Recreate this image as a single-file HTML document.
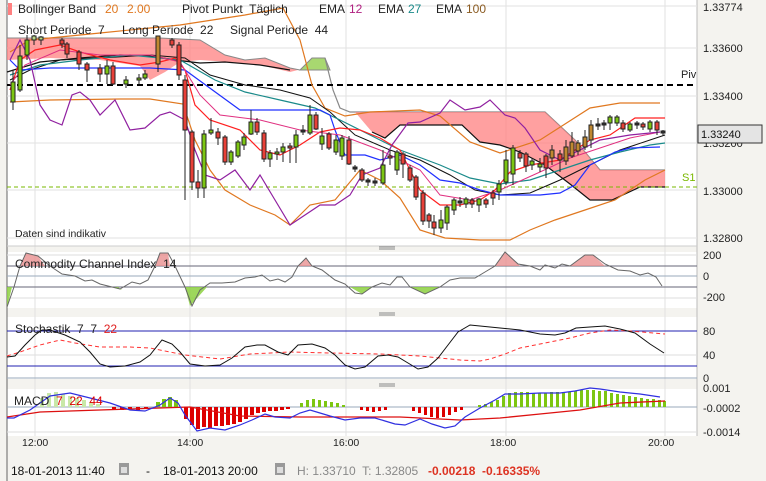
<!DOCTYPE html>
<html><head><meta charset="utf-8"><style>
body{margin:0;width:766px;height:481px;background:#f4f3ef;overflow:hidden;font-family:"Liberation Sans",sans-serif}
svg{position:absolute;left:0;top:0}
text{font-family:"Liberation Sans",sans-serif;white-space:pre}
</style></head><body>
<svg width="766" height="481" viewBox="0 0 766 481" xml:space="preserve">
<rect x="7" y="0" width="690" height="246" fill="#fff"/>
<rect x="7" y="252" width="690" height="56" fill="#fff"/>
<rect x="7" y="317" width="690" height="62" fill="#fff"/>
<rect x="7" y="389" width="690" height="47" fill="#fff"/>
<line x1="7" y1="0" x2="7" y2="481" stroke="#666"/>
<line x1="697" y1="0" x2="697" y2="436" stroke="#bbb"/>
<g stroke="#e2e2e2">
<line x1="35" y1="0" x2="35" y2="436"/><line x1="190" y1="0" x2="190" y2="436"/>
<line x1="346" y1="0" x2="346" y2="436"/><line x1="506" y1="0" x2="506" y2="436"/>
<line x1="665" y1="0" x2="665" y2="436"/>
<line x1="7" y1="6" x2="697" y2="6"/><line x1="7" y1="48" x2="697" y2="48"/>
<line x1="7" y1="96" x2="697" y2="96"/><line x1="7" y1="143" x2="697" y2="143"/>
<line x1="7" y1="190" x2="697" y2="190"/><line x1="7" y1="238" x2="697" y2="238"/>
</g>
<g stroke="#888"><line x1="379" y1="247" x2="395" y2="247"/><line x1="379" y1="249" x2="395" y2="249"/>
<line x1="379" y1="313" x2="395" y2="313"/><line x1="379" y1="315" x2="395" y2="315"/>
<line x1="379" y1="384" x2="395" y2="384"/><line x1="379" y1="386" x2="395" y2="386"/></g>
<line x1="7" y1="246" x2="697" y2="246" stroke="#ccc"/>

<polygon points="7,38 160,38 200,40 225,55 245,60 265,58 290,68 298,70 290,72 260,65 230,62 200,60 180,62 165,72 150,80 140,66 100,60 50,58 7,60" fill="#ff8080" fill-opacity="0.75"/>
<polygon points="300,70 312,58 325,58 330,70" fill="#a8d870" stroke="#888"/>
<polyline points="7,38 160,38 200,40 225,55 245,60 265,58 290,68 300,70" fill="none" stroke="#888"/>
<polyline points="325,58 333,90 340,108 350,112 545,112 575,140 600,170 665,170" fill="none" stroke="#888" stroke-width="1.2"/>
<polygon points="355,112 545,112 575,140 600,170 665,170 665,187 640,187 612,200 590,200 570,184 545,165 520,152 500,145 480,142 462,125 400,125 385,138 372,132" fill="#ff8080" fill-opacity="0.75"/>
<polyline points="372,132 385,138 400,125 462,125 480,142 500,145 520,152 545,165 570,184 590,200 612,200 640,187 665,187" fill="none" stroke="#111" stroke-width="1.2"/>
<polyline points="7,72 40,62 80,58 120,55 150,56 175,60 200,63 225,62 260,65 290,70" fill="none" stroke="#111" stroke-width="1.2"/>

<line x1="7" y1="85" x2="697" y2="85" stroke="#000" stroke-width="2" stroke-dasharray="6,4"/>
<line x1="7" y1="187" x2="697" y2="187" stroke="#7ab800" stroke-dasharray="4,3"/>
<text x="681" y="78" font-size="11" fill="#222">Piv</text>
<text x="682" y="181" font-size="11" fill="#7ab800">S1</text>

<polyline points="10,52 30,40 100,33 150,28 180,25 245,15 283,8 300,40 312,85 325,108 345,116 370,112 420,110 440,116 470,142 500,153 540,140 565,124 590,108 620,103 660,103" fill="none" stroke="#e07820" stroke-width="1.2"/>
<polyline points="10,102 50,100 120,99 150,99 183,104 195,140 210,170 225,190 250,205 275,215 290,225 310,205 335,200 360,170 380,180 400,198 420,230 445,238 480,240 510,240 530,230 555,220 585,210 615,200 645,180 665,170" fill="none" stroke="#e07820" stroke-width="1.2"/>
<polyline points="10,80 30,70 60,60 100,58 150,55 185,58 210,75 245,85 280,90 310,98 330,112 355,135 390,150 420,160 450,175 475,190 500,195 530,193 560,180 590,165 620,150 650,140 665,135" fill="none" stroke="#111"/>
<polyline points="10,75 40,65 80,60 130,55 180,60 215,80 245,92 280,100 315,108 340,120 360,130 400,150 440,165 470,178 500,184 530,180 560,170 590,160 620,152 650,145 665,143" fill="none" stroke="#1a8a8a" stroke-width="1.2"/>
<polyline points="10,60 20,70 50,68 150,68 185,70 240,110 320,110 330,115 335,130 345,155 365,155 380,160 400,155 420,165 440,180 460,183 480,190 500,195 540,195 560,193 575,185 590,165 600,160 615,152 630,148 660,147" fill="none" stroke="#2030ff" stroke-width="1.2"/>
<polyline points="10,90 20,60 35,50 60,45 80,52 110,60 140,65 160,62 175,58 185,70 195,105 210,120 240,130 260,150 280,155 300,145 320,132 340,128 360,130 380,138 400,150 420,190 440,205 460,205 480,200 495,190 510,172 530,165 560,160 590,140 610,135 635,118 665,118" fill="none" stroke="#ff2020" stroke-width="1.2"/>
<polyline points="10,85 25,65 60,50 100,55 150,55 180,62 200,95 220,115 260,120 300,130 340,135 380,150 420,170 440,195 470,200 500,190 540,172 570,158 600,148 630,138 660,132" fill="none" stroke="#e03080" stroke-width="1"/>
<polyline points="10,60 20,40 30,60 40,105 50,120 62,125 72,95 80,92 90,100 100,115 115,100 130,130 145,128 160,115 170,112 185,120 195,150 205,175 220,180 235,170 250,190 260,175 275,200 290,225 305,215 320,205 335,205 350,195 362,175 380,168 392,145 408,123 420,122 440,113 450,100 465,110 480,107 490,100 505,115 515,118 525,128 540,150 560,160 580,150 600,140 630,135 660,132" fill="none" stroke="#9020a0" stroke-width="1.2"/>

<g stroke="#222" stroke-width="1">
<line x1="13" y1="70" x2="13" y2="110"/><rect x="11" y="82" width="4" height="20" fill="#7cc612"/>
<line x1="20" y1="45" x2="20" y2="92"/><rect x="18" y="56" width="4" height="34" fill="#7cc612"/>
<line x1="27" y1="35" x2="27" y2="60"/><rect x="25" y="40" width="4" height="15" fill="#7cc612"/>
<line x1="34" y1="35" x2="34" y2="45"/><rect x="32" y="36" width="4" height="4" fill="#b8d888"/>
<line x1="41" y1="36" x2="41" y2="45"/><rect x="39" y="37" width="4" height="3" fill="#b8d888"/>
<line x1="62" y1="38" x2="62" y2="48"/><rect x="60" y="40" width="4" height="4" fill="#e84038"/>
<line x1="67" y1="42" x2="67" y2="58"/><rect x="65" y="44" width="4" height="10" fill="#e84038"/>
<line x1="79" y1="50" x2="79" y2="70"/><rect x="77" y="52" width="4" height="12" fill="#e84038"/>
<line x1="87" y1="62" x2="87" y2="82"/><rect x="85" y="64" width="4" height="6" fill="#e84038"/>
<line x1="100" y1="64" x2="100" y2="82"/><rect x="98" y="68" width="4" height="6" fill="#e84038"/>
<line x1="107" y1="60" x2="107" y2="84"/><rect x="105" y="66" width="4" height="8" fill="#7cc612"/>
<line x1="113" y1="62" x2="113" y2="85"/><rect x="111" y="66" width="4" height="18" fill="#e84038"/>
<line x1="126" y1="76" x2="126" y2="88"/><rect x="124" y="80" width="4" height="4" fill="#7cc612"/>
<line x1="139" y1="74" x2="139" y2="84"/><rect x="137" y="78" width="4" height="2" fill="#7cc612"/>
<line x1="145" y1="70" x2="145" y2="80"/><rect x="143" y="74" width="4" height="4" fill="#7cc612"/>
<line x1="158" y1="36" x2="158" y2="72"/><rect x="156" y="36" width="4" height="28" fill="#c08830"/>
<line x1="172" y1="38" x2="172" y2="48"/><rect x="170" y="40" width="4" height="5" fill="#e84038"/>
<line x1="179" y1="42" x2="179" y2="80"/><rect x="177" y="45" width="4" height="30" fill="#e84038"/>
<line x1="185" y1="75" x2="185" y2="200"/><rect x="183" y="80" width="4" height="50" fill="#e84038"/>
<line x1="192" y1="130" x2="192" y2="190"/><rect x="190" y="132" width="4" height="50" fill="#e84038"/>
<line x1="198" y1="170" x2="198" y2="198"/><rect x="196" y="182" width="4" height="6" fill="#e84038"/>
<line x1="204" y1="130" x2="204" y2="198"/><rect x="202" y="134" width="4" height="54" fill="#7cc612"/>
<line x1="211" y1="118" x2="211" y2="135"/><rect x="209" y="130" width="4" height="3" fill="#7cc612"/>
<line x1="218" y1="128" x2="218" y2="145"/><rect x="216" y="132" width="4" height="6" fill="#e84038"/>
<line x1="225" y1="135" x2="225" y2="165"/><rect x="223" y="137" width="4" height="25" fill="#e84038"/>
<line x1="231" y1="150" x2="231" y2="165"/><rect x="229" y="152" width="4" height="10" fill="#7cc612"/>
<line x1="238" y1="140" x2="238" y2="158"/><rect x="236" y="142" width="4" height="14" fill="#7cc612"/>
<line x1="244" y1="133" x2="244" y2="150"/><rect x="242" y="137" width="4" height="8" fill="#7cc612"/>
<line x1="251" y1="110" x2="251" y2="135"/><rect x="249" y="122" width="4" height="12" fill="#7cc612"/>
<line x1="257" y1="118" x2="257" y2="135"/><rect x="255" y="122" width="4" height="10" fill="#e84038"/>
<line x1="264" y1="130" x2="264" y2="162"/><rect x="262" y="133" width="4" height="26" fill="#e84038"/>
<line x1="270" y1="150" x2="270" y2="167"/><rect x="268" y="153" width="4" height="6" fill="#7cc612"/>
<line x1="277" y1="148" x2="277" y2="160"/><rect x="275" y="152" width="4" height="2" fill="#7cc612"/>
<line x1="283" y1="143" x2="283" y2="162"/><rect x="281" y="147" width="4" height="5" fill="#7cc612"/>
<line x1="290" y1="143" x2="290" y2="163"/><rect x="288" y="146" width="4" height="2" fill="#e84038"/>
<line x1="296" y1="130" x2="296" y2="163"/><rect x="294" y="135" width="4" height="12" fill="#7cc612"/>
<line x1="303" y1="125" x2="303" y2="135"/><rect x="301" y="130" width="4" height="2" fill="#333"/>
<line x1="310" y1="105" x2="310" y2="135"/><rect x="308" y="115" width="4" height="18" fill="#7cc612"/>
<line x1="316" y1="112" x2="316" y2="130"/><rect x="314" y="115" width="4" height="14" fill="#e84038"/>
<line x1="322" y1="128" x2="322" y2="150"/><rect x="320" y="136" width="4" height="8" fill="#7cc612"/>
<line x1="329" y1="132" x2="329" y2="150"/><rect x="327" y="134" width="4" height="14" fill="#e84038"/>
<line x1="336" y1="135" x2="336" y2="155"/><rect x="334" y="140" width="4" height="12" fill="#7cc612"/>
<line x1="342" y1="135" x2="342" y2="160"/><rect x="340" y="138" width="4" height="18" fill="#7cc612"/>
<line x1="349" y1="136" x2="349" y2="165"/><rect x="347" y="140" width="4" height="24" fill="#e84038"/>
<line x1="355" y1="165" x2="355" y2="172"/><rect x="353" y="167" width="4" height="2" fill="#333"/>
<line x1="362" y1="168" x2="362" y2="182"/><rect x="360" y="170" width="4" height="10" fill="#e84038"/>
<line x1="368" y1="178" x2="368" y2="186"/><rect x="366" y="180" width="4" height="2" fill="#333"/>
<line x1="375" y1="178" x2="375" y2="186"/><rect x="373" y="181" width="4" height="2" fill="#333"/>
<line x1="383" y1="150" x2="383" y2="185"/><rect x="381" y="165" width="4" height="18" fill="#7cc612"/>
<line x1="390" y1="150" x2="390" y2="165"/><rect x="388" y="156" width="4" height="2" fill="#e84038"/>
<line x1="397" y1="150" x2="397" y2="175"/><rect x="395" y="152" width="4" height="18" fill="#7cc612"/>
<line x1="403" y1="152" x2="403" y2="178"/><rect x="401" y="154" width="4" height="10" fill="#e84038"/>
<line x1="410" y1="165" x2="410" y2="182"/><rect x="408" y="168" width="4" height="12" fill="#e84038"/>
<line x1="416" y1="175" x2="416" y2="200"/><rect x="414" y="177" width="4" height="20" fill="#e84038"/>
<line x1="423" y1="190" x2="423" y2="225"/><rect x="421" y="193" width="4" height="28" fill="#e84038"/>
<line x1="429" y1="213" x2="429" y2="228"/><rect x="427" y="215" width="4" height="6" fill="#e84038"/>
<line x1="434" y1="215" x2="434" y2="235"/><rect x="432" y="222" width="4" height="6" fill="#e84038"/>
<line x1="441" y1="210" x2="441" y2="233"/><rect x="439" y="220" width="4" height="8" fill="#7cc612"/>
<line x1="447" y1="205" x2="447" y2="230"/><rect x="445" y="207" width="4" height="16" fill="#7cc612"/>
<line x1="454" y1="198" x2="454" y2="215"/><rect x="452" y="200" width="4" height="10" fill="#7cc612"/>
<line x1="460" y1="197" x2="460" y2="207"/><rect x="458" y="201" width="4" height="2" fill="#333"/>
<line x1="466" y1="197" x2="466" y2="208"/><rect x="464" y="199" width="4" height="5" fill="#7cc612"/>
<line x1="472" y1="198" x2="472" y2="208"/><rect x="470" y="200" width="4" height="4" fill="#e84038"/>
<line x1="479" y1="198" x2="479" y2="212"/><rect x="477" y="199" width="4" height="6" fill="#7cc612"/>
<line x1="486" y1="198" x2="486" y2="208"/><rect x="484" y="200" width="4" height="4" fill="#e84038"/>
<line x1="493" y1="190" x2="493" y2="205"/><rect x="491" y="193" width="4" height="5" fill="#e84038"/>
<line x1="499" y1="180" x2="499" y2="200"/><rect x="497" y="184" width="4" height="8" fill="#7cc612"/>
<line x1="506" y1="150" x2="506" y2="185"/><rect x="504" y="160" width="4" height="22" fill="#7cc612"/>
<line x1="513" y1="145" x2="513" y2="185"/><rect x="511" y="148" width="4" height="26" fill="#7cc612"/>
<line x1="520" y1="150" x2="520" y2="162"/><rect x="518" y="153" width="4" height="5" fill="#e84038"/>
<line x1="526" y1="152" x2="526" y2="172"/><rect x="524" y="154" width="4" height="12" fill="#e84038"/>
<line x1="532" y1="158" x2="532" y2="170"/><rect x="530" y="161" width="4" height="4" fill="#7cc612"/>
<line x1="540" y1="158" x2="540" y2="172"/><rect x="538" y="164" width="4" height="3" fill="#7cc612"/>
<line x1="546" y1="154" x2="546" y2="178"/><rect x="544" y="156" width="4" height="12" fill="#e84038"/>
<line x1="552" y1="145" x2="552" y2="165"/><rect x="550" y="150" width="4" height="8" fill="#c08830"/>
<line x1="560" y1="150" x2="560" y2="172"/><rect x="558" y="154" width="4" height="6" fill="#e84038"/>
<line x1="566" y1="140" x2="566" y2="165"/><rect x="564" y="147" width="4" height="14" fill="#c08830"/>
<line x1="572" y1="132" x2="572" y2="158"/><rect x="570" y="142" width="4" height="14" fill="#c08830"/>
<line x1="578" y1="140" x2="578" y2="155"/><rect x="576" y="143" width="4" height="8" fill="#c08830"/>
<line x1="585" y1="130" x2="585" y2="150"/><rect x="583" y="137" width="4" height="10" fill="#c08830"/>
<line x1="591" y1="120" x2="591" y2="148"/><rect x="589" y="125" width="4" height="15" fill="#c08830"/>
<line x1="598" y1="118" x2="598" y2="130"/><rect x="596" y="124" width="4" height="2" fill="#333"/>
<line x1="604" y1="120" x2="604" y2="130"/><rect x="602" y="123" width="4" height="2" fill="#333"/>
<line x1="610" y1="115" x2="610" y2="130"/><rect x="608" y="117" width="4" height="6" fill="#7cc612"/>
<line x1="617" y1="115" x2="617" y2="126"/><rect x="615" y="117" width="4" height="6" fill="#7cc612"/>
<line x1="623" y1="120" x2="623" y2="132"/><rect x="621" y="123" width="4" height="6" fill="#e84038"/>
<line x1="630" y1="122" x2="630" y2="132"/><rect x="628" y="124" width="4" height="6" fill="#7cc612"/>
<line x1="637" y1="121" x2="637" y2="129"/><rect x="635" y="123" width="4" height="2" fill="#333"/>
<line x1="643" y1="122" x2="643" y2="130"/><rect x="641" y="124" width="4" height="3" fill="#e84038"/>
<line x1="650" y1="120" x2="650" y2="132"/><rect x="648" y="122" width="4" height="7" fill="#7cc612"/>
<line x1="657" y1="120" x2="657" y2="135"/><rect x="655" y="122" width="4" height="8" fill="#e84038"/>
<line x1="663" y1="130" x2="663" y2="136"/><rect x="661" y="131" width="4" height="2" fill="#333"/>
</g>

<g font-size="12" fill="#222">
<rect x="8" y="3" width="4" height="12" fill="#ff8080"/>
<text x="18" y="13">Bollinger Band</text><text x="105" y="13" fill="#e07820">20</text><text x="127" y="13" fill="#e07820">2.00</text>
<text x="182" y="13">Pivot Punkt  Täglich</text>
<text x="319" y="13">EMA</text><text x="349" y="13" fill="#b02080">12</text>
<text x="378" y="13">EMA</text><text x="408" y="13" fill="#1a8a8a">27</text>
<text x="436" y="13">EMA</text><text x="466" y="13" fill="#8a5a20">100</text>
<text x="18" y="34">Short Periode  7</text>
<text x="122" y="34">Long Periode  22</text>
<text x="230" y="34">Signal Periode  44</text>
<text x="15" y="237" font-size="10.5">Daten sind indikativ</text>
</g>
<g font-size="11" fill="#222">
<text x="703" y="11">1.33774</text><text x="703" y="52">1.33600</text>
<text x="703" y="100">1.33400</text><text x="703" y="147">1.33200</text>
<text x="703" y="195">1.33000</text><text x="703" y="242">1.32800</text>
</g>
<rect x="698" y="125" width="64" height="18" fill="#e4e4e4" stroke="#333"/>
<text x="701" y="138" font-size="11" fill="#111">1.33240</text>

<g stroke-width="1">
<line x1="7" y1="255" x2="697" y2="255" stroke="#ddd"/>
<line x1="7" y1="266" x2="697" y2="266" stroke="#667"/>
<line x1="7" y1="276" x2="697" y2="276" stroke="#9ab"/>
<line x1="7" y1="287" x2="697" y2="287" stroke="#667"/>
<line x1="7" y1="298" x2="697" y2="298" stroke="#ddd"/>
</g>
<g fill="#8cd040" fill-opacity="0.85">
<polygon points="7,287 12,287 7,308"/><polygon points="185,287 207,287 190,306"/>
<polygon points="112,287 122,290 118,287"/>
<polygon points="350,287 362,294 372,287"/>
<polygon points="410,287 425,294 440,287"/>
</g>
<g fill="#e89090" fill-opacity="0.8">
<polygon points="20,266 26,253 38,256 45,266"/>
<polygon points="155,266 160,253 168,253 170,266"/>
<polygon points="298,266 306,258 312,266"/>
<polygon points="495,266 505,252 520,266"/>
<polygon points="570,266 585,255 593,255 605,266"/>
</g>
<polyline points="7,307 14,287 20,266 26,253 38,256 50,266 62,274 75,276 85,281 92,280 100,284 112,287 120,289 132,282 140,284 148,280 155,266 160,253 168,253 175,266 185,287 192,306 200,290 210,283 222,283 235,282 245,278 255,277 262,275 270,281 278,279 285,282 292,277 298,266 306,258 312,266 322,270 335,280 345,284 355,293 362,294 372,287 382,283 390,285 397,277 402,277 410,287 425,294 440,287 450,280 460,278 475,278 485,272 495,266 505,252 518,264 530,266 540,270 545,265 555,268 562,264 570,266 585,255 593,255 605,264 618,270 630,271 640,275 648,273 656,277 662,286" fill="none" stroke="#666" stroke-width="1"/>
<g font-size="12" fill="#222"><text x="15" y="268">Commodity Channel Index  14</text></g>
<g font-size="11" fill="#222">
<text x="703" y="259">200</text><text x="703" y="280">0</text><text x="703" y="301">-200</text></g>

<line x1="7" y1="331" x2="697" y2="331" stroke="#2020b0"/>
<line x1="7" y1="355" x2="697" y2="355" stroke="#ddd"/>
<line x1="7" y1="366" x2="697" y2="366" stroke="#2020b0"/>
<line x1="7" y1="378" x2="697" y2="378" stroke="#9ab"/>
<polyline points="7,356 20,352 40,345 60,340 75,343 100,347 130,347 150,348 170,352 185,355 220,359 250,354 290,352 330,353 380,354 420,356 460,360 480,361 490,359 505,354 520,348 545,343 570,338 590,333 610,330 630,331 665,334" fill="none" stroke="#ff3030" stroke-dasharray="4,3"/>
<polyline points="7,357 15,356 25,345 35,335 42,330 50,330 65,335 80,342 90,352 100,364 110,367 125,366 140,362 150,355 162,340 172,344 180,352 190,364 205,366 220,365 232,358 245,347 257,345 265,345 278,352 288,355 298,345 312,344 325,348 335,355 345,365 355,369 365,367 378,356 388,355 398,357 408,363 418,369 428,367 438,358 448,345 458,332 470,325 480,326 500,328 520,330 540,334 555,335 565,333 576,328 590,327 605,326 620,329 635,333 650,344 664,353" fill="none" stroke="#111"/>
<g font-size="12" fill="#222"><text x="15" y="333">Stochastik  7  7  <tspan fill="#e02020">22</tspan></text></g>
<g font-size="11" fill="#222">
<text x="703" y="335">80</text><text x="703" y="359">40</text><text x="703" y="382">0</text></g>

<line x1="7" y1="407" x2="697" y2="407" stroke="#9ab"/>
<line x1="7" y1="432" x2="697" y2="432" stroke="#ddd"/>
<g fill="#c8e8a8">
<rect x="40" y="398" width="4" height="9"/><rect x="47" y="393" width="4" height="14"/><rect x="54" y="392" width="4" height="15"/><rect x="61" y="394" width="4" height="13"/><rect x="68" y="396" width="4" height="11"/><rect x="75" y="398" width="4" height="9"/><rect x="82" y="400" width="4" height="7"/><rect x="89" y="402" width="4" height="5"/><rect x="96" y="404" width="4" height="3"/>
</g>
<g fill="#7cc612">
<rect x="156" y="402" width="4" height="5"/><rect x="162" y="399" width="4" height="8"/><rect x="168" y="397" width="4" height="10"/><rect x="174" y="400" width="4" height="7"/>
<rect x="300" y="403" width="3" height="4"/><rect x="306" y="400" width="3" height="7"/><rect x="312" y="399" width="3" height="8"/><rect x="318" y="400" width="3" height="7"/><rect x="324" y="401" width="3" height="6"/><rect x="330" y="402" width="3" height="5"/><rect x="336" y="403" width="3" height="4"/><rect x="342" y="405" width="3" height="2"/>
<rect x="478" y="405" width="3" height="2"/><rect x="484" y="404" width="3" height="3"/><rect x="490" y="402" width="3" height="5"/><rect x="496" y="400" width="3" height="7"/><rect x="502" y="396" width="3" height="11"/><rect x="508" y="393" width="3" height="14"/><rect x="514" y="392" width="3" height="15"/><rect x="520" y="392" width="3" height="15"/><rect x="526" y="392" width="3" height="15"/><rect x="532" y="393" width="3" height="14"/><rect x="538" y="393" width="3" height="14"/><rect x="544" y="393" width="3" height="14"/><rect x="550" y="392" width="3" height="15"/><rect x="556" y="392" width="3" height="15"/><rect x="562" y="392" width="3" height="15"/><rect x="568" y="392" width="3" height="15"/><rect x="574" y="391" width="3" height="16"/><rect x="580" y="390" width="3" height="17"/><rect x="586" y="390" width="3" height="17"/><rect x="592" y="390" width="3" height="17"/><rect x="598" y="391" width="3" height="16"/><rect x="604" y="391" width="3" height="16"/><rect x="610" y="393" width="3" height="14"/><rect x="616" y="394" width="3" height="13"/><rect x="622" y="395" width="3" height="12"/><rect x="628" y="396" width="3" height="11"/><rect x="634" y="397" width="3" height="10"/><rect x="640" y="398" width="3" height="9"/><rect x="646" y="399" width="3" height="8"/><rect x="652" y="399" width="3" height="8"/><rect x="658" y="400" width="3" height="7"/><rect x="663" y="401" width="3" height="6"/>
</g>
<g fill="#dd0000">
<rect x="112" y="407" width="4" height="2"/><rect x="120" y="407" width="4" height="3"/><rect x="128" y="407" width="4" height="3"/><rect x="136" y="407" width="4" height="3"/><rect x="144" y="407" width="4" height="2"/>
<rect x="184" y="407" width="4" height="12"/><rect x="190" y="407" width="4" height="18"/><rect x="196" y="407" width="4" height="22"/><rect x="202" y="407" width="4" height="20"/><rect x="208" y="407" width="4" height="21"/><rect x="214" y="407" width="4" height="19"/><rect x="220" y="407" width="4" height="19"/><rect x="226" y="407" width="4" height="18"/><rect x="232" y="407" width="4" height="17"/><rect x="238" y="407" width="4" height="15"/><rect x="244" y="407" width="4" height="12"/><rect x="250" y="407" width="4" height="8"/><rect x="256" y="407" width="4" height="6"/><rect x="262" y="407" width="4" height="5"/><rect x="268" y="407" width="4" height="4"/><rect x="274" y="407" width="4" height="4"/><rect x="280" y="407" width="4" height="3"/><rect x="286" y="407" width="4" height="2"/>
<rect x="360" y="407" width="3" height="3"/><rect x="366" y="407" width="3" height="4"/><rect x="372" y="407" width="3" height="5"/><rect x="378" y="407" width="3" height="4"/><rect x="384" y="407" width="3" height="3"/>
<rect x="412" y="407" width="3" height="4"/><rect x="418" y="407" width="3" height="6"/><rect x="424" y="407" width="3" height="8"/><rect x="430" y="407" width="3" height="10"/><rect x="436" y="407" width="3" height="11"/><rect x="442" y="407" width="3" height="10"/><rect x="448" y="407" width="3" height="8"/><rect x="454" y="407" width="3" height="5"/><rect x="460" y="407" width="3" height="3"/>
</g>
<polyline points="7,417 40,412 100,410 160,408 190,407 240,416 300,417 350,417 400,417 460,420 500,418 540,414 580,410 620,403 665,401" fill="none" stroke="#dd1010" stroke-width="1.3"/>
<polyline points="7,418 14,418 30,410 50,396 70,393 90,398 110,403 130,410 145,411 160,405 170,398 178,403 185,415 197,431 210,428 225,430 240,425 252,420 265,414 275,417 290,418 300,413 310,410 320,413 330,416 345,420 360,418 375,418 385,421 395,424 405,425 420,419 432,424 445,428 455,426 465,417 480,408 495,400 505,394 520,394 540,393 560,393 575,391 590,388 600,389 620,392 640,394 660,397" fill="none" stroke="#3030e0" stroke-width="1.2"/>
<g font-size="12" fill="#222"><text x="14" y="405">MACD  <tspan fill="#dd0000">7  22  44</tspan></text></g>
<g font-size="11" fill="#222"><text x="703" y="392">0.001</text><text x="703" y="412">-0.0002</text><text x="703" y="436">-0.0014</text></g>

<g font-size="10.5" fill="#222"><text x="22" y="446">12:00</text><text x="177" y="446">14:00</text><text x="333" y="446">16:00</text><text x="490" y="446">18:00</text><text x="648" y="446">20:00</text></g>

<g font-size="12">
<text x="11" y="475" fill="#111">18-01-2013 11:40</text>
<rect x="119" y="463" width="10" height="12" fill="#999"/><rect x="121" y="467" width="6" height="6" fill="#ddd"/>
<text x="146" y="475" fill="#111">-</text>
<text x="163" y="475" fill="#111">18-01-2013 20:00</text>
<rect x="275" y="463" width="10" height="12" fill="#999"/><rect x="277" y="467" width="6" height="6" fill="#ddd"/>
<text x="297" y="475" fill="#888">H: 1.33710  T: 1.32805</text>
<text x="428" y="475" fill="#dd3322" font-weight="bold">-0.00218  -0.16335%</text>
</g>
</svg>
</body></html>
